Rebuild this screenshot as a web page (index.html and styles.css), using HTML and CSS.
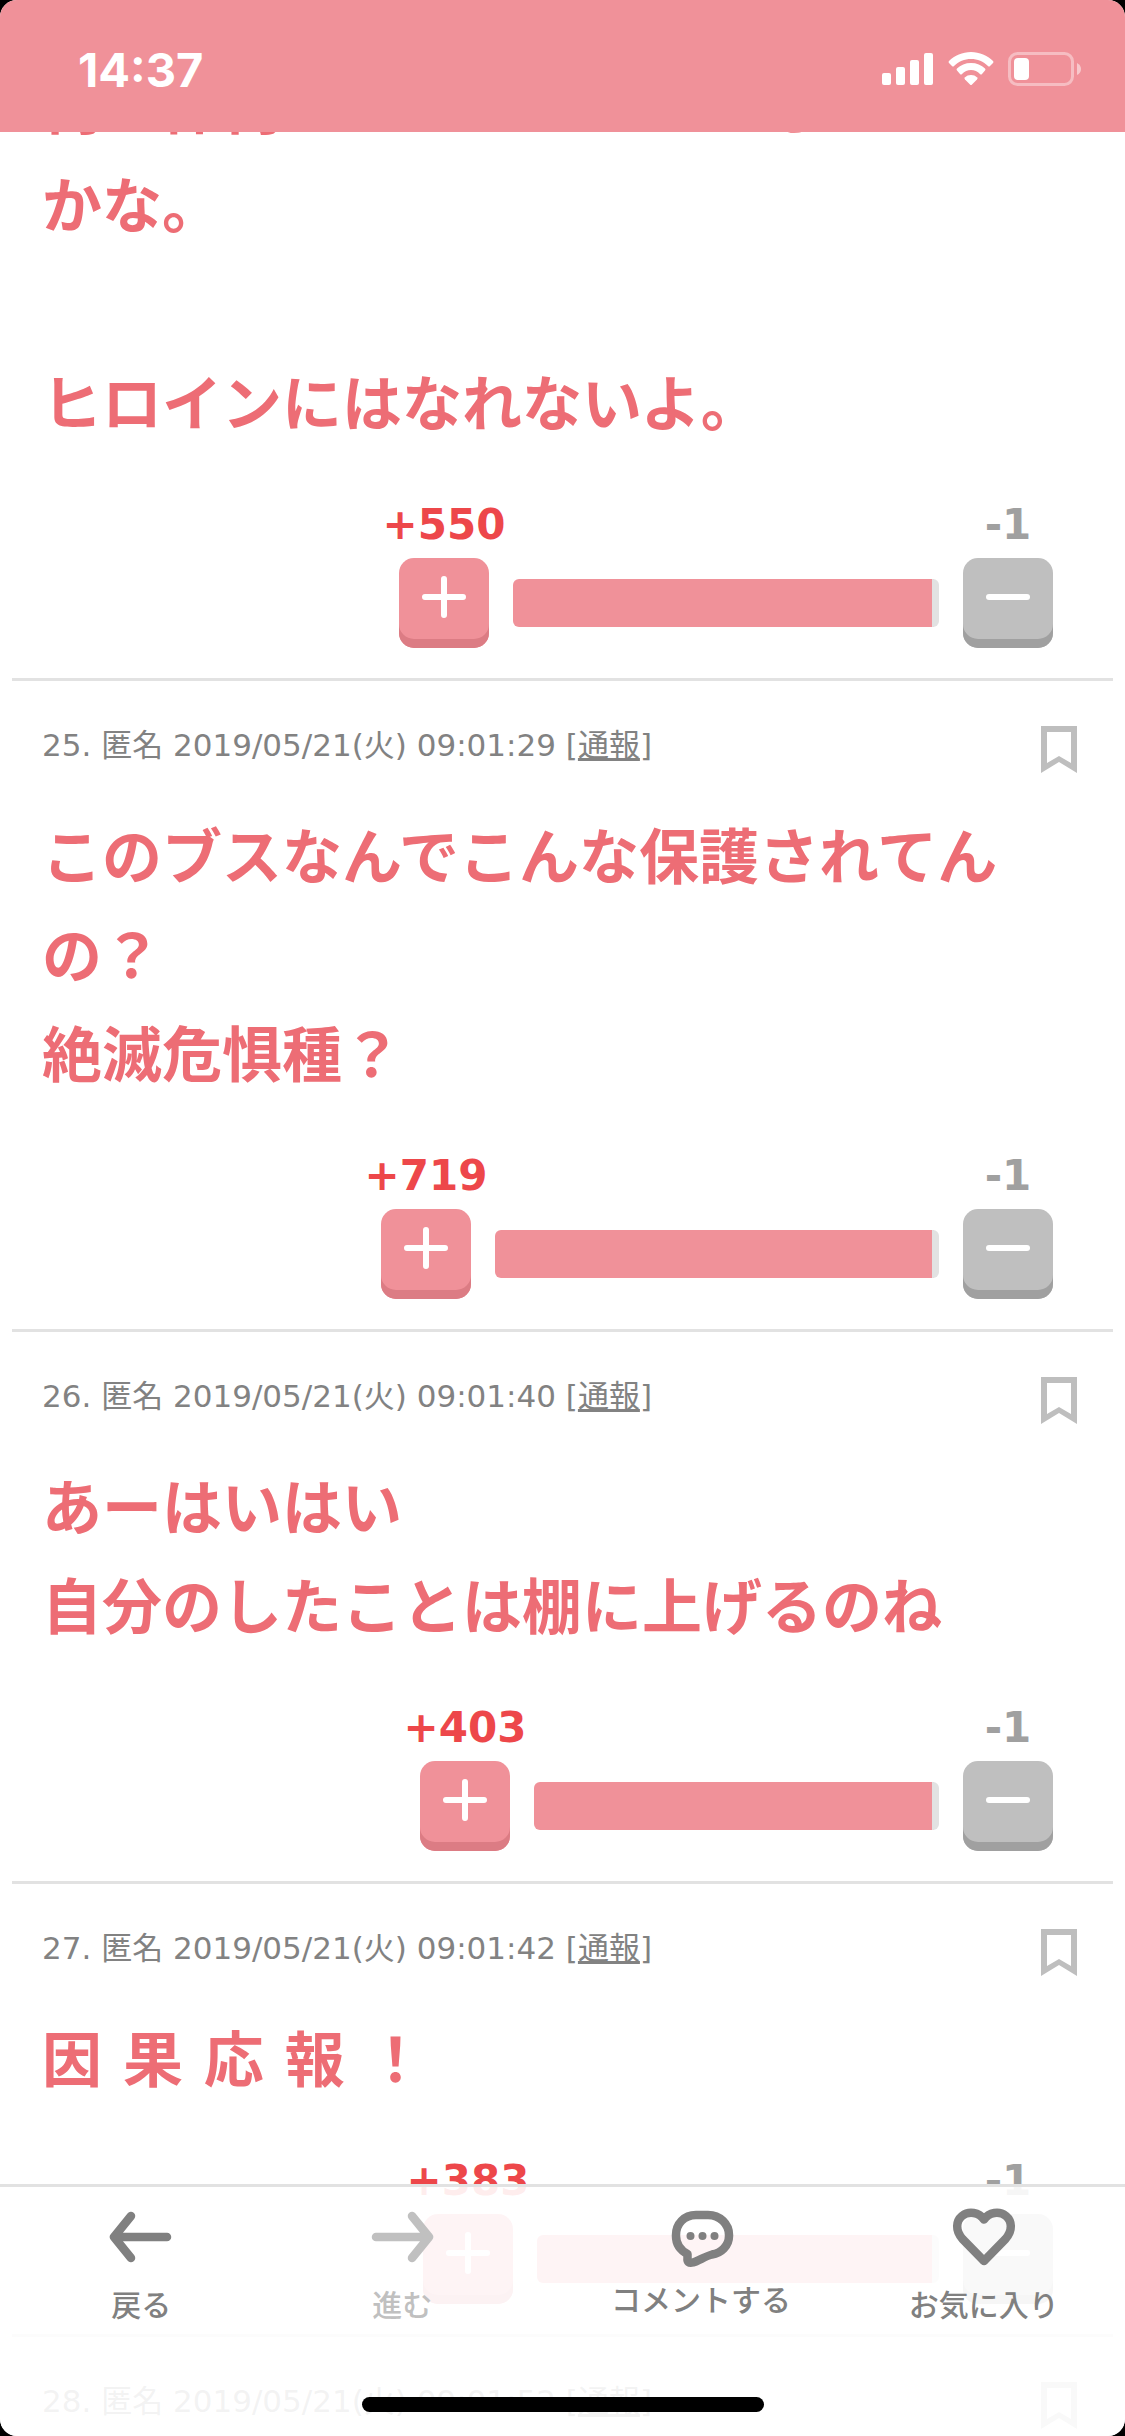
FILE: index.html
```html
<!DOCTYPE html>
<html lang="ja">
<head>
    <meta charset="UTF-8">
    <meta name="viewport" content="width=device-width, initial-scale=1.0">
    <title>コメント一覧</title>
    <link rel="stylesheet" href="styles.css">
</head>
<body>
    <svg class="sprite" aria-hidden="true">
        <symbol id="bookmark" viewBox="0 0 36 47">
            <path fill-rule="evenodd" d="M0 0H36V47L18 36L0 47ZM6 6V37L18 30L30 37V6Z" fill="currentColor"/>
        </symbol>
        <symbol id="plus" viewBox="0 0 46 46">
            <path d="M4 23H42M23 5V41" fill="none" stroke="currentColor" stroke-width="6" stroke-linecap="round"/>
        </symbol>
        <symbol id="minus" viewBox="0 0 46 46">
            <path d="M4 23H42" fill="none" stroke="currentColor" stroke-width="6" stroke-linecap="round"/>
        </symbol>
    </svg>

    <div class="screen">
        <header class="status-bar">
            <span class="clock">14:37</span>
            <div class="status-icons">
                <svg width="52" height="34" viewBox="0 0 52 34" fill="#fff">
                    <rect x="0" y="21" width="9" height="12" rx="2"/>
                    <rect x="14" y="15" width="9" height="18" rx="2"/>
                    <rect x="28" y="8" width="9" height="25" rx="2"/>
                    <rect x="42" y="1" width="9" height="32" rx="2"/>
                </svg>
                <svg width="46" height="34" viewBox="0 0 46 34" fill="#fff">
                    <path d="M23 0C31.500 0 39.500 3.500 45 9Q46 10 45 11L42 14Q41 15 40 14C35.500 9.500 29.500 7 23 7S10.500 9.500 6 14Q5 15 4 14L1 11Q0 10 1 9C6.500 3.500 14.500 0 23 0Z"/>
                    <path d="M23 11C28.500 11 33.500 13 37 16.500Q38 17.500 37 18.500L34 22Q33 23 32 22C29.500 19.200 26.500 18 23 18S16.500 19.200 14 22Q13 23 12 22L9 18.500Q8 17.500 9 16.500C12.500 13 17.500 11 23 11Z"/>
                    <path d="M23 23C25.500 23 27.500 23.800 29.200 25.500Q30 26.500 29 27.500L24 32.500Q23 33.500 22 32.500L17 27.500Q16 26.500 16.800 25.500C18.500 23.800 20.500 23 23 23Z"/>
                </svg>
                <svg width="74" height="34" viewBox="0 0 74 34">
                    <rect x="1.500" y="1.500" width="63" height="31" rx="8" fill="none" stroke="#fff" stroke-opacity=".4" stroke-width="3"/>
                    <path d="M69 11Q73 13 73 17T69 23Z" fill="#fff" fill-opacity=".5"/>
                    <rect x="6" y="6" width="15" height="22" rx="4" fill="#fff"/>
                </svg>
            </div>
        </header>

        <main class="comments">
            <article class="item">
                <p class="comment">何で体何かへこへこエーコも<br>かな。<br><br>ヒロインにはなれないよ。</p>
                <div class="votes">
                    <div class="vote vote-plus">
                        <span class="count">+550</span>
                        <button type="button" aria-label="プラス"><svg><use href="#plus"/></svg></button>
                    </div>
                    <div class="bar" style="width: 426px"></div>
                    <div class="vote vote-minus">
                        <span class="count">-1</span>
                        <button type="button" aria-label="マイナス"><svg><use href="#minus"/></svg></button>
                    </div>
                </div>
            </article>

            <article class="item">
                <div class="meta">
                    <span>25. 匿名 2019/05/21(火) 09:01:29 [<a href="#">通報</a>]</span>
                    <button type="button" class="save" aria-label="保存"><svg><use href="#bookmark"/></svg></button>
                </div>
                <p class="comment">このブスなんでこんな保護されてんの？<br>絶滅危惧種？</p>
                <div class="votes">
                    <div class="vote vote-plus">
                        <span class="count">+719</span>
                        <button type="button" aria-label="プラス"><svg><use href="#plus"/></svg></button>
                    </div>
                    <div class="bar" style="width: 444px"></div>
                    <div class="vote vote-minus">
                        <span class="count">-1</span>
                        <button type="button" aria-label="マイナス"><svg><use href="#minus"/></svg></button>
                    </div>
                </div>
            </article>

            <article class="item">
                <div class="meta">
                    <span>26. 匿名 2019/05/21(火) 09:01:40 [<a href="#">通報</a>]</span>
                    <button type="button" class="save" aria-label="保存"><svg><use href="#bookmark"/></svg></button>
                </div>
                <p class="comment">あーはいはい<br>自分のしたことは棚に上げるのね</p>
                <div class="votes">
                    <div class="vote vote-plus">
                        <span class="count">+403</span>
                        <button type="button" aria-label="プラス"><svg><use href="#plus"/></svg></button>
                    </div>
                    <div class="bar" style="width: 405px"></div>
                    <div class="vote vote-minus">
                        <span class="count">-1</span>
                        <button type="button" aria-label="マイナス"><svg><use href="#minus"/></svg></button>
                    </div>
                </div>
            </article>

            <article class="item">
                <div class="meta">
                    <span>27. 匿名 2019/05/21(火) 09:01:42 [<a href="#">通報</a>]</span>
                    <button type="button" class="save" aria-label="保存"><svg><use href="#bookmark"/></svg></button>
                </div>
                <p class="comment">因 果 応 報 ！</p>
                <div class="votes">
                    <div class="vote vote-plus">
                        <span class="count">+383</span>
                        <button type="button" aria-label="プラス"><svg><use href="#plus"/></svg></button>
                    </div>
                    <div class="bar" style="width: 402px"></div>
                    <div class="vote vote-minus">
                        <span class="count">-1</span>
                        <button type="button" aria-label="マイナス"><svg><use href="#minus"/></svg></button>
                    </div>
                </div>
            </article>

            <article class="item">
                <div class="meta">
                    <span>28. 匿名 2019/05/21(火) 09:01:52 [<a href="#">通報</a>]</span>
                    <button type="button" class="save" aria-label="保存"><svg><use href="#bookmark"/></svg></button>
                </div>
            </article>
        </main>

        <nav class="toolbar">
            <button type="button" class="tool">
                <svg width="66" height="66" viewBox="0 0 66 66" fill="none" stroke="currentColor" stroke-width="8.500" stroke-linecap="round" stroke-linejoin="round">
                    <path d="M59 33H6M23 12L6 33L23 54"/>
                </svg>
                戻る
            </button>
            <button type="button" class="tool tool-off" disabled>
                <svg width="66" height="66" viewBox="0 0 66 66" fill="none" stroke="currentColor" stroke-width="8.500" stroke-linecap="round" stroke-linejoin="round">
                    <path d="M7 33H60M43 12L60 33L43 54"/>
                </svg>
                進む
            </button>
            <button type="button" class="tool tool-comment">
                <svg width="66" height="66" viewBox="0 0 66 66" fill="none" stroke="currentColor" stroke-width="8.500" stroke-linejoin="round">
                    <path d="M28 11H40C52 11 61 20 61 31V32C61 42 53 49 44 50.500C38 52 31 56.500 25 58.500C21 59.500 19 58 19.500 54V50C12 46 8 40 8 32V31C8 20 16 11 28 11Z"/>
                    <g fill="currentColor" stroke="none">
                        <circle cx="22.500" cy="32" r="4"/>
                        <circle cx="34.500" cy="32" r="4"/>
                        <circle cx="46.500" cy="32" r="4"/>
                    </g>
                </svg>
                コメントする
            </button>
            <button type="button" class="tool">
                <svg width="66" height="66" viewBox="0 0 66 66" fill="none" stroke="currentColor" stroke-width="8.500" stroke-linejoin="round">
                    <path d="M33 57L11.500 35C4 26.500 5 17 11 12C18 6.500 28 8.500 33 15.500C38 8.500 48 6.500 55 12C61 17 62 26.500 54.500 35Z"/>
                </svg>
                お気に入り
            </button>
        </nav>
        <div class="home-indicator"></div>
    </div>
</body>
</html>
```

FILE: styles.css
```css
* {
    box-sizing: border-box;
}
body {
    margin: 0;
    background: #000;
    font-family: "DejaVu Sans", "Noto Sans CJK JP", sans-serif;
}
button {
    padding: 0;
    border: none;
    background: none;
    font: inherit;
    cursor: pointer;
}
svg {
    display: block;
}
.sprite {
    position: absolute;
    width: 0;
    height: 0;
}
.screen {
    position: relative;
    height: 100vh;
    overflow: hidden;
    border-radius: 17px;
    background: #fff;
}

/* status bar */
.status-bar {
    position: absolute;
    top: 0;
    left: 0;
    right: 0;
    z-index: 2;
    display: flex;
    justify-content: space-between;
    align-items: center;
    height: 132px;
    padding: 6px 43px 0 78px;
    background: #f09199;
}
.clock {
    font-family: Inter, sans-serif;
    font-size: 47px;
    font-weight: 700;
    color: #fff;
}
.status-icons {
    display: flex;
    gap: 14px;
}

/* comments */
.comments {
    padding: 59px 12px 0;
}
.item {
    padding: 45px 60px 30px 30px;
    border-bottom: 3px solid #e2e2e2;
}
.item:first-child {
    padding-top: 0;
}
.meta {
    display: flex;
    justify-content: space-between;
    align-items: flex-start;
    height: 47px;
    margin: 0 -24px 36px 0;
    font-size: 31px;
    line-height: 38px;
    color: #828282;
}
.meta a {
    color: inherit;
}
.save {
    color: #bebebe;
}
.save svg {
    width: 36px;
    height: 47px;
}
.comment {
    margin: 0 0 46px;
    font-size: 60px;
    font-weight: 700;
    line-height: 99px;
    color: #ed6d75;
}
.votes {
    display: flex;
    justify-content: flex-end;
    align-items: flex-end;
    gap: 24px;
}
.vote {
    display: flex;
    flex-direction: column;
    align-items: center;
    gap: 9px;
    width: 90px;
}
.count {
    font-size: 42px;
    font-weight: 700;
    line-height: 48px;
}
.vote button {
    width: 90px;
    height: 90px;
    padding-bottom: 12px;
    border-radius: 15px;
    color: #fff;
}
.vote svg {
    width: 46px;
    height: 46px;
    margin: 0 auto;
}
.vote-plus .count {
    color: #ed474a;
}
.vote-plus button {
    background: #f09199;
    box-shadow: inset 0 -9px #dc7c84;
}
.vote-minus .count {
    color: #a0a0a0;
}
.vote-minus button {
    background: #bfbfbf;
    box-shadow: inset 0 -9px #a0a0a0;
}
.bar {
    height: 48px;
    margin-bottom: 21px;
    border-right: 7px solid #e2e2e2;
    border-radius: 6px;
    background: #f09199;
}

/* bottom toolbar */
.toolbar {
    position: absolute;
    left: 0;
    right: 0;
    bottom: 0;
    display: grid;
    grid-template-columns: 26fr 22fr 33fr 19fr;
    align-items: start;
    height: 252px;
    padding: 17px 38px 0 0;
    border-top: 3px solid #e2e2e2;
    background: rgba(255, 255, 255, 0.9);
}
.tool {
    display: flex;
    flex-direction: column;
    align-items: center;
    gap: 14px;
    color: #808080;
    font-size: 30px;
    font-weight: 500;
    line-height: 44px;
    white-space: nowrap;
}
.tool-comment {
    gap: 9px;
}
.tool-off {
    color: #c0c0c0;
}
.home-indicator {
    position: absolute;
    left: 50%;
    bottom: 24px;
    width: 402px;
    height: 15px;
    margin-left: -201px;
    border-radius: 8px;
    background: #000;
}
```
